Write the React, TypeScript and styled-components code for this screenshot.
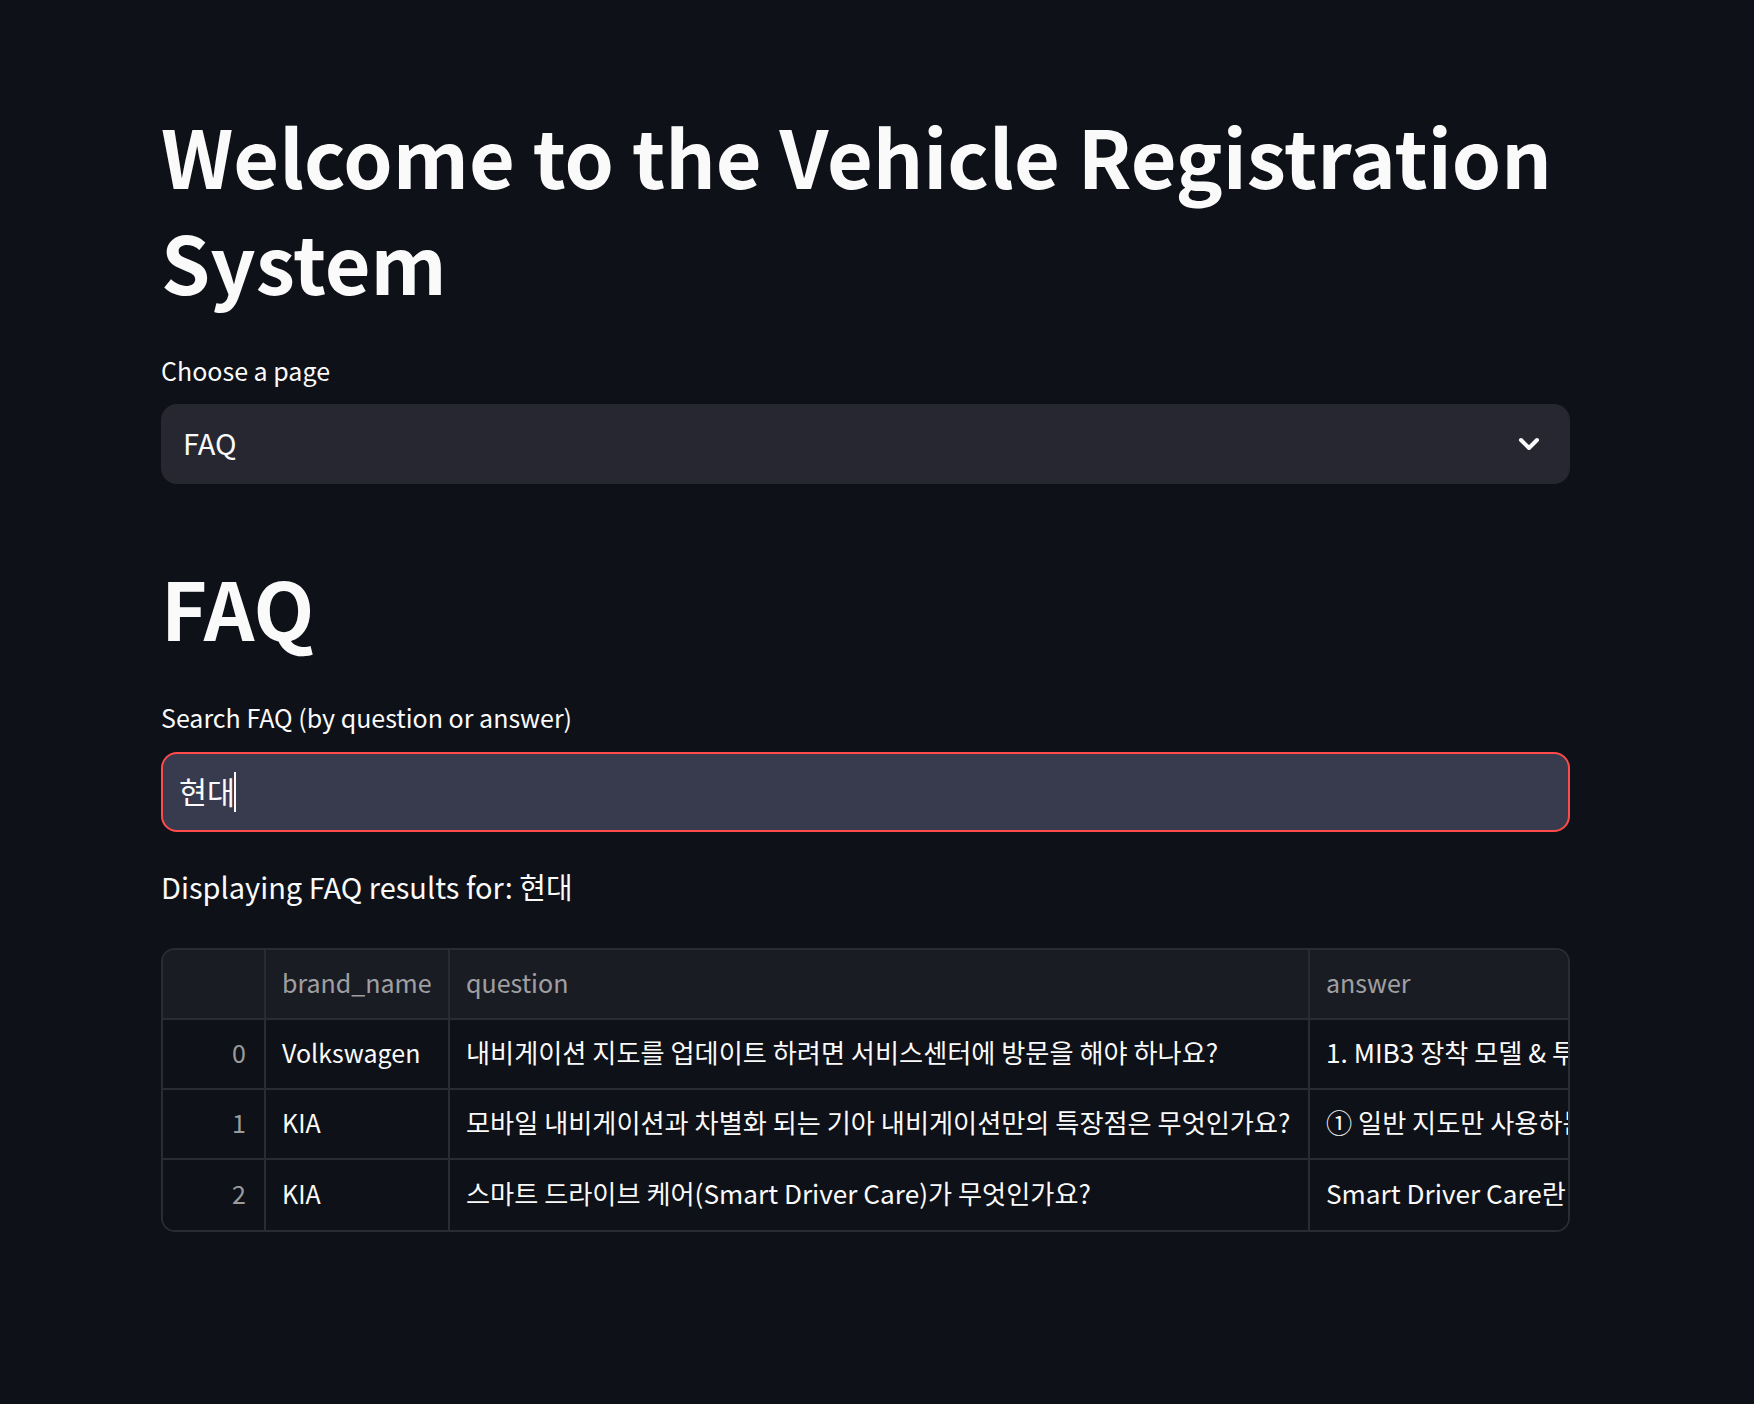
import React from "react";
import styled, { createGlobalStyle } from "styled-components";

const GlobalStyle = createGlobalStyle`
  html, body {
    margin: 0;
    padding: 0;
    background: #0e1117;
  }
  body {
    font-family: "Noto Sans CJK KR", "Noto Sans", sans-serif;
    color: #fafafa;
  }
  * { box-sizing: border-box; }
`;

const Main = styled.main`
  min-height: 1404px;
  background: #0e1117;
  padding: 102px 0 80px 161px;
`;

const Block = styled.div`
  width: 1409px;
  display: flex;
  flex-direction: column;
`;

const Heading = styled.h1<{ $top: number }>`
  margin: ${(p) => p.$top}px 0 0 0;
  font-size: 79px;
  line-height: 105.6px;
  font-weight: 700;
  color: #fafafa;
  letter-spacing: 0;
`;

const Label = styled.label<{ $top: number }>`
  display: block;
  margin-top: ${(p) => p.$top}px;
  font-size: 25px;
  line-height: 44.8px;
  color: #fafafa;
`;

const Select = styled.div`
  margin-top: 11px;
  height: 80px;
  border-radius: 16px;
  background: #262730;
  display: flex;
  align-items: center;
  justify-content: space-between;
  padding: 0 30px 0 22px;
  font-size: 29px;
  color: #fafafa;
`;

const SelectValue = styled.span`
  line-height: 1;
  padding-bottom: 2px;
`;

const InputBox = styled.div`
  margin-top: 13px;
  height: 80px;
  border-radius: 16px;
  background: #383b4d;
  border: 2px solid #ff4b4b;
  display: flex;
  align-items: center;
  padding: 0 16px;
  font-size: 30.5px;
  color: #fafafa;
`;

const InputText = styled.span`
  line-height: 1;
  padding-bottom: 2px;
`;

const Caret = styled.span`
  display: inline-block;
  width: 2px;
  height: 40px;
  background: #fafafa;
  margin-left: -1px;
`;

const Paragraph = styled.p`
  margin: 29px 0 0 0;
  font-size: 29px;
  line-height: 51.2px;
  color: #fafafa;
`;

const Table = styled.div`
  margin-top: 35px;
  border: 2px solid #2a2c34;
  border-radius: 14px;
  overflow: hidden;
  display: grid;
  grid-template-columns: 103px 184px 860px 1fr;
`;

const Cell = styled.div<{
  $header?: boolean;
  $index?: boolean;
  $last?: boolean;
  $lastRow?: boolean;
  $korean?: boolean;
}>`
  height: 70px;
  display: flex;
  align-items: center;
  justify-content: ${(p) => (p.$index ? "flex-end" : "flex-start")};
  padding: 0 ${(p) => (p.$index ? "18px" : "0")} 4px ${(p) => (p.$index ? "0" : "16px")};
  background: ${(p) => (p.$header ? "#1a1c24" : "#0e1117")};
  border-right: ${(p) => (p.$last ? "none" : "2px solid #2a2c34")};
  border-bottom: ${(p) => (p.$lastRow ? "none" : "2px solid #2a2c34")};
  font-size: ${(p) => (p.$korean ? "26.2px" : "25px")};
  color: ${(p) => (p.$header || p.$index ? "rgba(250,250,250,0.6)" : "#fafafa")};
  white-space: nowrap;
  overflow: hidden;
`;

const Chevron = () => (
  <svg width="22" height="14" viewBox="0 0 22 14" fill="none">
    <path d="M3 3 L11 11 L19 3" stroke="#fafafa" strokeWidth="4" strokeLinecap="round" strokeLinejoin="round" />
  </svg>
);

const rows = [
  {
    i: "0",
    brand: "Volkswagen",
    q: "내비게이션 지도를 업데이트 하려면 서비스센터에 방문을 해야 하나요?",
    a: "1. MIB3 장착 모델 & 투아렉 모델은 서비스센터 방문 없이 업데이트가 가능합니다.",
  },
  {
    i: "1",
    brand: "KIA",
    q: "모바일 내비게이션과 차별화 되는 기아 내비게이션만의 특장점은 무엇인가요?",
    a: "① 일반 지도만 사용하는 모바일 내비게이션과 달리 정밀 지도를 활용합니다.",
  },
  {
    i: "2",
    brand: "KIA",
    q: "스마트 드라이브 케어(Smart Driver Care)가 무엇인가요?",
    a: "Smart Driver Care란 차량 운행 정보를 기반으로 한 서비스입니다.",
  },
];

export default function App() {
  return (
    <>
      <GlobalStyle />
      <Main>
        <Block>
          <Heading $top={0}>Welcome to the Vehicle Registration System</Heading>
          <Label $top={35}>Choose a page</Label>
          <Select>
            <SelectValue>FAQ</SelectValue>
            <Chevron />
          </Select>
          <Heading $top={70}>FAQ</Heading>
          <Label $top={35}>Search FAQ (by question or answer)</Label>
          <InputBox>
            <InputText>현대</InputText>
            <Caret />
          </InputBox>
          <Paragraph>Displaying FAQ results for: 현대</Paragraph>
          <Table>
            <Cell $header />
            <Cell $header>brand_name</Cell>
            <Cell $header>question</Cell>
            <Cell $header $last>answer</Cell>
            {rows.map((r, idx) => {
              const lastRow = idx === rows.length - 1;
              return (
                <React.Fragment key={r.i}>
                  <Cell $index $lastRow={lastRow}>{r.i}</Cell>
                  <Cell $lastRow={lastRow}>{r.brand}</Cell>
                  <Cell $korean $lastRow={lastRow}>{r.q}</Cell>
                  <Cell $korean $last $lastRow={lastRow}>{r.a}</Cell>
                </React.Fragment>
              );
            })}
          </Table>
        </Block>
      </Main>
    </>
  );
}
